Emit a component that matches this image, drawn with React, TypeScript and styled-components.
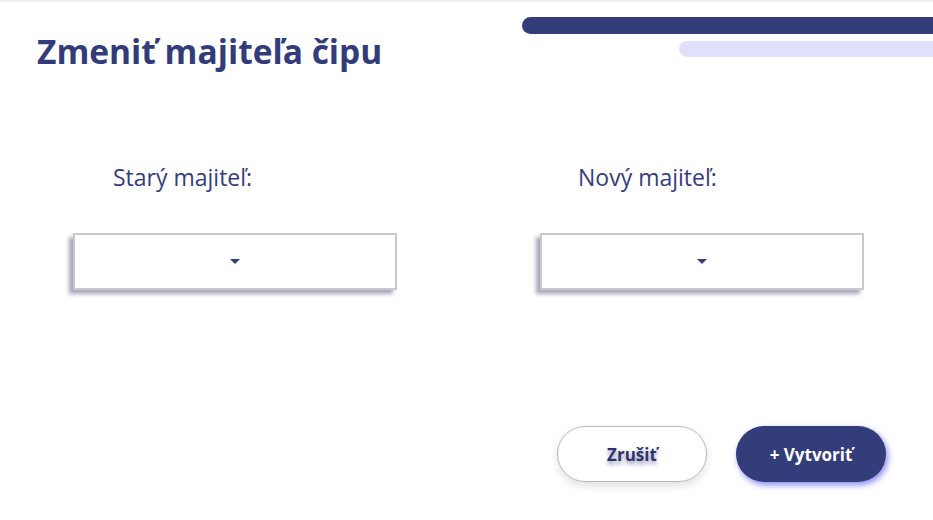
import React from "react";
import styled, { createGlobalStyle } from "styled-components";

const Global = createGlobalStyle`
  html, body { margin: 0; padding: 0; background: #ffffff; }
  body { font-family: "Open Sans", "Noto Sans", "Liberation Sans", sans-serif; }
  * { box-sizing: border-box; }
`;

const Page = styled.div`
  width: 933px;
  height: 520px;
  border-top: 2px solid #eef0f6;
  overflow: hidden;
  display: flex;
  flex-direction: column;
  background: #ffffff;
`;

const Header = styled.header`
  display: flex;
  justify-content: space-between;
  align-items: flex-start;
  height: 120px;
`;

const Title = styled.h1`
  margin: 0;
  padding: 26px 0 0 37px;
  font-size: 33.5px;
  line-height: 46px;
  font-weight: 700;
  color: #323c7a;
  letter-spacing: 0;
`;

const Decor = styled.div`
  display: flex;
  flex-direction: column;
  align-items: flex-end;
  gap: 7px;
  padding-top: 15px;
`;

const Bar = styled.div<{ $w: number; $h: number; $c: string }>`
  width: ${(p) => p.$w}px;
  height: ${(p) => p.$h}px;
  background: ${(p) => p.$c};
  border-radius: ${(p) => p.$h / 2}px 0 0 ${(p) => p.$h / 2}px;
`;

const Fields = styled.section`
  display: flex;
  gap: 143px;
  padding-left: 73px;
  margin-top: 40px;
`;

const Field = styled.div`
  display: flex;
  flex-direction: column;
`;

const Label = styled.label<{ $w: number; $pad: number }>`
  display: block;
  width: ${(p) => p.$w}px;
  padding-left: ${(p) => p.$pad}px;
  box-sizing: content-box;
  white-space: nowrap;
  overflow: hidden;
  font-size: 23px;
  line-height: 30px;
  color: #363d7c;
  height: 30px;
`;

const SelectBox = styled.div`
  margin-top: 41px;
  width: 324px;
  height: 57px;
  background: #ffffff;
  border: 2px solid #c9c9c9;
  box-shadow: -4px 4px 4px rgba(60, 60, 110, 0.45);
  display: flex;
  align-items: center;
  justify-content: center;
`;

const Caret = styled.span`
  width: 0;
  height: 0;
  border-left: 5px solid transparent;
  border-right: 5px solid transparent;
  border-top: 5px solid #333d7a;
`;

const Footer = styled.footer`
  display: flex;
  justify-content: flex-end;
  gap: 29px;
  padding-right: 47px;
  margin-top: 136px;
`;

const Button = styled.button<{ $primary?: boolean }>`
  width: 150px;
  height: 56px;
  border-radius: 28px;
  font-family: "Open Sans", "Noto Sans", "Liberation Sans", sans-serif;
  font-size: 17px;
  font-weight: 700;
  cursor: pointer;
  ${(p) =>
    p.$primary
      ? `
    background: #333d7a;
    color: #ffffff;
    border: none;
    box-shadow: 2px 3px 6px rgba(100, 100, 240, 0.75);
  `
      : `
    background: #ffffff;
    color: #2d3570;
    border: 1.5px solid #b9b9b9;
    box-shadow: 0 4px 9px rgba(0, 0, 0, 0.12);
    text-shadow: 0 3px 4px rgba(40, 40, 110, 0.5);
  `}
`;

export default function App() {
  return (
    <>
      <Global />
      <Page>
        <Header>
          <Title>Zmeniť majiteľa čipu</Title>
          <Decor>
            <Bar $w={411} $h={17} $c="#333d7a" />
            <Bar $w={254} $h={16} $c="#e0e0fc" />
          </Decor>
        </Header>
        <Fields>
          <Field>
            <Label $w={160} $pad={40}>Starý majiteľ:</Label>
            <SelectBox>
              <Caret />
            </SelectBox>
          </Field>
          <Field>
            <Label $w={139} $pad={38}>Nový majiteľ:</Label>
            <SelectBox>
              <Caret />
            </SelectBox>
          </Field>
        </Fields>
        <Footer>
          <Button>Zrušiť</Button>
          <Button $primary>+ Vytvoriť</Button>
        </Footer>
      </Page>
    </>
  );
}
